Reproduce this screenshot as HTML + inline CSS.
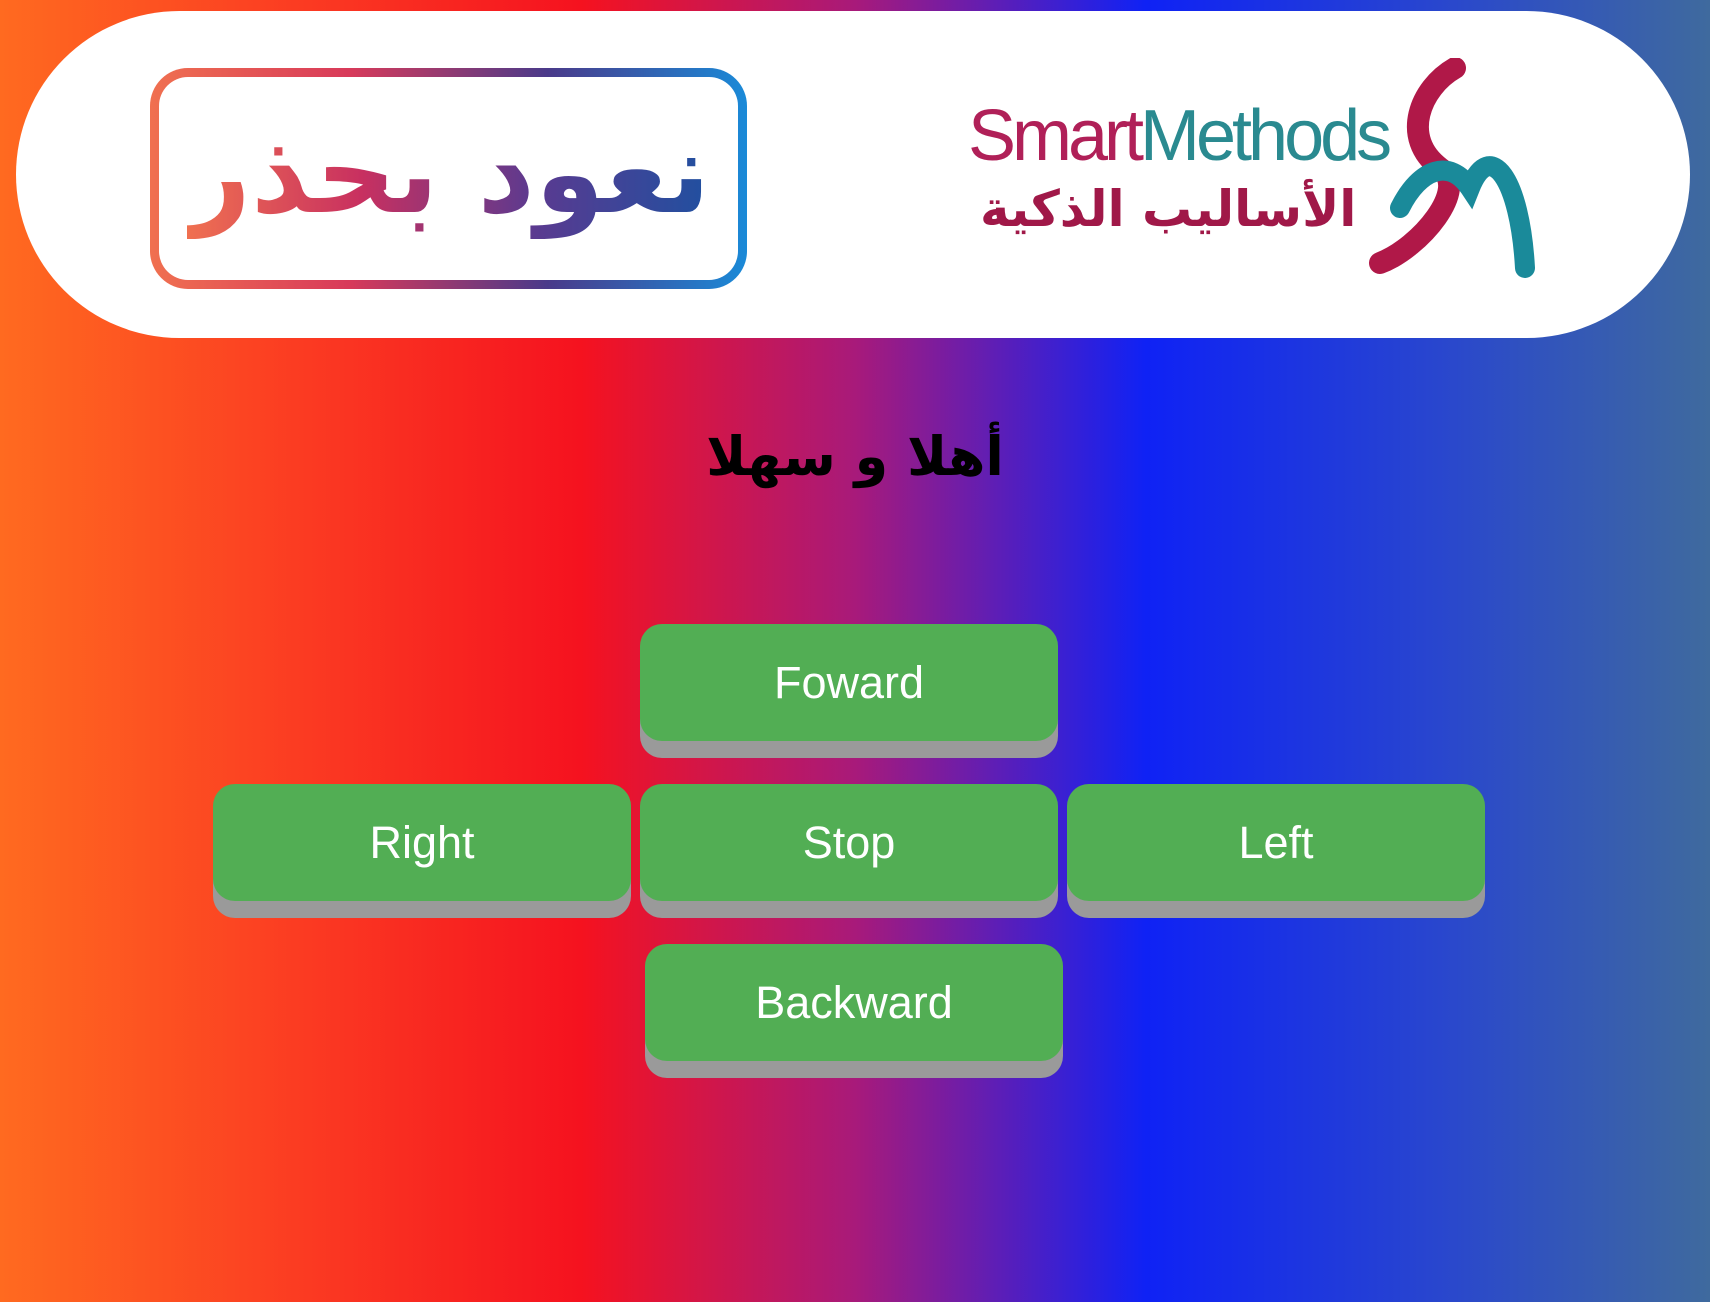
<!DOCTYPE html>
<html><head><meta charset="utf-8"><style>
body{margin:0;width:1710px;height:1302px;overflow:hidden;background:linear-gradient(90deg,#ff6a20 0%,#fb3a22 18%,#f5121f 34%,#a81a7a 50%,#0f22f5 67%,#2a48cc 85%,#3f6a9e 100%);font-family:"Liberation Sans","DejaVu Sans",sans-serif;position:relative}
.hdr{position:absolute;left:16px;top:11px;width:1674px;height:327px;background:#fff;border-radius:164px}
.logo1{position:absolute;left:150px;top:68px;width:597px;height:221px;border-radius:38px;border:9px solid transparent;background:linear-gradient(#fff,#fff) padding-box,linear-gradient(90deg,#f07050,#d83a5a,#4a3a8a,#1a8ad8) border-box;box-sizing:border-box;display:flex;align-items:center;justify-content:center;font-family:"DejaVu Sans",sans-serif;font-weight:bold;font-size:112px;color:#b03060;direction:rtl}
.logo1 span{background:linear-gradient(90deg,#f07050,#c83060,#5a3a90,#2050a0);-webkit-background-clip:text;color:transparent;letter-spacing:-4px;margin-top:-10px}
.sm{position:absolute;left:968px;top:95px;font-size:72px;letter-spacing:-4px;color:#2a8a90}
.sm b{font-weight:normal;color:#b02058}
.ar{position:absolute;left:980px;top:180px;font-family:"DejaVu Sans",sans-serif;font-weight:bold;font-size:50px;color:#a01848;direction:rtl}
h1{position:absolute;left:0;width:1710px;top:425px;margin:0;text-align:center;font-family:"DejaVu Sans",sans-serif;font-size:54px;font-weight:bold;color:#000;direction:rtl}
.b{position:absolute;width:418px;height:117px;background:#52ae54;border-radius:22px;box-shadow:0 17px 0 #9a9a9a;color:#fff;font-size:45px;display:flex;align-items:center;justify-content:center}
</style></head><body>
<div class="hdr"></div>
<div class="logo1"><span>نعود بحذر</span></div>
<div class="sm"><b>Smart</b>Methods</div>
<div class="ar">الأساليب الذكية</div>
<svg style="position:absolute;left:1360px;top:58px" width="185" height="225" viewBox="0 0 185 225"><path d="M95 10 C60 30 40 80 80 110 C110 130 60 190 20 205" stroke="#b01848" stroke-width="22" fill="none" stroke-linecap="round"/><path d="M40 150 C60 110 90 100 110 130 C130 80 160 120 165 210" stroke="#1a8a9a" stroke-width="20" fill="none" stroke-linecap="round"/></svg>
<h1>أهلا و سهلا</h1>
<div class="b" style="left:640px;top:624px">Foward</div>
<div class="b" style="left:213px;top:784px">Right</div>
<div class="b" style="left:640px;top:784px">Stop</div>
<div class="b" style="left:1067px;top:784px">Left</div>
<div class="b" style="left:645px;top:944px">Backward</div>
</body></html>
